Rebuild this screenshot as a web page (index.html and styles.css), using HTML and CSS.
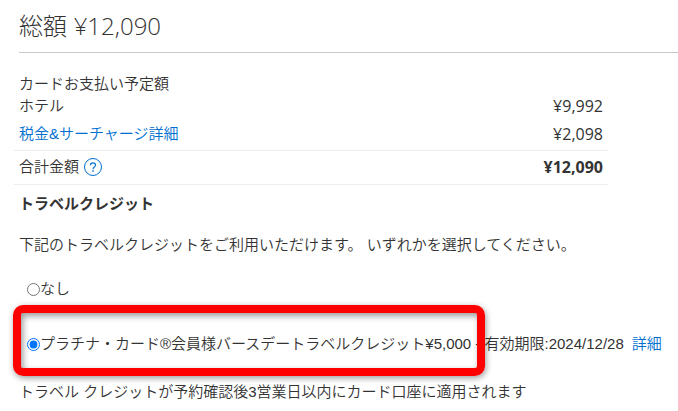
FILE: index.html
```html
<!DOCTYPE html>
<html lang="ja">
  <head>
    <meta charset="UTF-8" />
    <meta name="viewport" content="width=device-width, initial-scale=1.0" />
    <title>お支払い総額</title>
    <link rel="stylesheet" href="styles.css">
  </head>
  <body>
    <h1>総額 <span class="amount">¥12,090</span></h1>

    <section class="payment">
      <table>
        <caption>カードお支払い予定額</caption>
        <tbody>
          <tr>
            <th scope="row">ホテル</th>
            <td class="amount">¥9,992</td>
          </tr>
          <tr class="tax">
            <th scope="row"><a href="#tax">税金&amp;サーチャージ詳細</a></th>
            <td class="amount">¥2,098</td>
          </tr>
          <tr class="total">
            <th scope="row">
              <div class="totalLabel">
                合計金額
                <button class="help" type="button" aria-label="合計金額について">
                  <svg viewBox="0 0 20 20" width="20" height="20" fill="none" stroke="currentColor">
                    <circle cx="10" cy="10" r="8.5" stroke-width="1" />
                    <path d="M7.5 8.2C7.5 6.7 8.5 5.9 10 5.9s2.5.8 2.5 2.1c0 1.2-.7 1.7-1.4 2.3-.7.5-1.1.9-1.1 1.9" stroke-width="1.1" />
                    <path d="M10 13.3v1.5" stroke-width="1.4" />
                  </svg>
                </button>
              </div>
            </th>
            <td class="amount">¥12,090</td>
          </tr>
        </tbody>
      </table>
    </section>

    <form class="credit">
      <h2>トラベルクレジット</h2>
      <p class="lead">下記のトラベルクレジットをご利用いただけます。 いずれかを選択してください。</p>
      <div class="option">
        <input type="radio" name="credit" id="creditNone" />
        <label for="creditNone">なし</label>
      </div>
      <div class="option birthday">
        <input type="radio" name="credit" id="creditBirthday" checked />
        <label for="creditBirthday">プラチナ・カード®会員様バースデートラベルクレジット¥5,000 - 有効期限:2024/12/28</label>
        <a href="#credit">詳細</a>
        <span class="marker"></span>
      </div>
      <p class="note">トラベル クレジットが予約確認後3営業日以内にカード口座に適用されます</p>
    </form>
  </body>
</html>
```

FILE: styles.css
```css
* {
  padding: 0;
  margin: 0;
  box-sizing: border-box;
}
body {
  padding-left: 19px;
  background-color: #ffffff;
  color: #333333;
  font-family: "Liberation Sans", "Noto Sans CJK JP", sans-serif;
  font-size: 15px;
  font-weight: 350;
  line-height: 22px;
}
a {
  color: #006fcf;
  text-decoration: none;
}
h1 {
  padding: 10px 0 9px;
  border-bottom: 1px solid #c8c9c7;
  font-size: 24px;
  font-weight: 300;
  line-height: 32px;
}
.amount {
  font-family: "Open Sans", sans-serif;
}

/* payment table */
.payment {
  margin: 20px 70px 0 -5px;
}
table {
  width: 100%;
  border-collapse: separate;
  border-spacing: 0;
}
caption,
th,
td {
  padding: 0 5px;
  text-align: left;
  font-weight: 350;
}
td.amount {
  text-align: right;
  font-size: 16px;
  font-weight: 400;
}
.tax th,
.tax td {
  padding-top: 6px;
  padding-bottom: 5px;
  border-bottom: 1px solid #ecedee;
}
.total th,
.total td {
  padding-top: 5px;
  padding-bottom: 6px;
  border-bottom: 1px solid #ecedee;
}
.total td.amount {
  font-weight: 700;
}
.totalLabel {
  display: flex;
  align-items: center;
  gap: 4px;
}
.help {
  height: 20px;
  border: none;
  background: transparent;
  color: #006fcf;
  cursor: pointer;
}
.help svg {
  display: block;
}

/* travel credit */
h2 {
  margin-top: 8px;
  font-size: 15px;
  font-weight: 700;
}
.lead {
  margin-top: 19px;
}
.option {
  display: flex;
  align-items: center;
  position: relative;
  margin-top: 22px;
  padding-left: 8px;
  white-space: nowrap;
}
.option input {
  width: 13px;
  height: 13px;
  flex: none;
}
.option a {
  margin-left: 8px;
}
.birthday {
  margin-top: 33px;
}
.marker {
  position: absolute;
  top: -28px;
  left: -6px;
  width: 472px;
  height: 71px;
  border: 8px solid #ff0000;
  border-radius: 10px;
  box-shadow: 1px 2px 6px rgba(0, 0, 0, 0.4), inset 2px 3px 6px rgba(0, 0, 0, 0.4);
  pointer-events: none;
}
.note {
  margin-top: 26px;
}
```
